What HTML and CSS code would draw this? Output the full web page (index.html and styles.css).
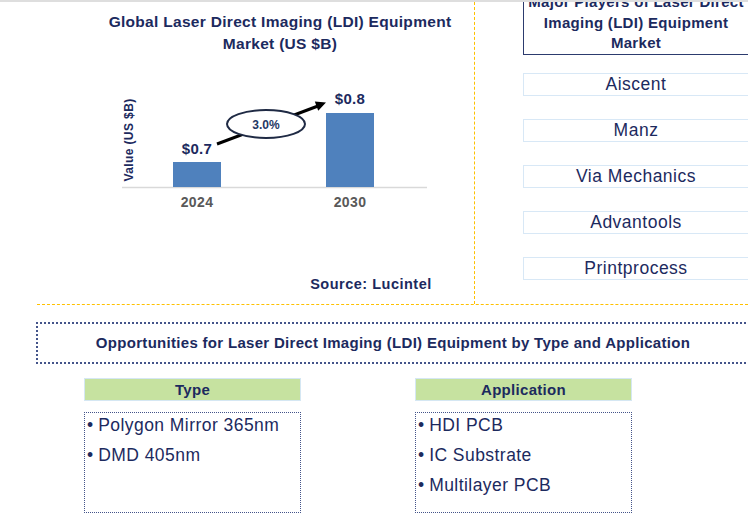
FILE: index.html
```html
<!DOCTYPE html>
<html lang="en">
<head>
<meta charset="utf-8">
<title>Laser Direct Imaging (LDI) Equipment Market</title>
<link rel="stylesheet" href="styles.css">
</head>
<body>
<div class="page">
  <div class="topbar"></div>
  <div class="top">
    <section class="chart-panel">
      <h1 class="chart-title">Global Laser Direct Imaging (LDI) Equipment<br>Market (US $B)</h1>
      <svg class="chart" width="476" height="161" viewBox="0 54 476 161" xmlns="http://www.w3.org/2000/svg">
        <line x1="122" y1="186.5" x2="427" y2="186.5" stroke="#d9d9d9" stroke-width="1.5"/>
        <rect x="173" y="161" width="48" height="25" fill="#4f81bd"/>
        <rect x="326" y="112" width="48" height="74" fill="#4f81bd"/>
        <text class="axis-label" transform="translate(132.5,139) rotate(-90)" text-anchor="middle">Value (US $B)</text>
        <text class="val" x="197" y="152.5" text-anchor="middle">$0.7</text>
        <text class="val" x="350" y="102.5" text-anchor="middle">$0.8</text>
        <text class="year" x="197" y="206" text-anchor="middle">2024</text>
        <text class="year" x="350" y="206" text-anchor="middle">2030</text>
        <line x1="217" y1="143" x2="318" y2="105" stroke="#000" stroke-width="3"/>
        <polygon points="326,101.5 318.2,109.8 314.8,100.6" fill="#000"/>
        <ellipse cx="266" cy="123" rx="39" ry="14" fill="#fff" stroke="#1f2a44" stroke-width="2"/>
        <text class="cagr" x="266" y="127.5" text-anchor="middle">3.0%</text>
      </svg>
      <p class="source">Source: Lucintel</p>
    </section>
    <aside class="players">
      <div class="players-head">Major Players of Laser Direct<br>Imaging (LDI) Equipment<br>Market</div>
      <ul class="player-list">
        <li>Aiscent</li>
        <li>Manz</li>
        <li>Via Mechanics</li>
        <li>Advantools</li>
        <li>Printprocess</li>
      </ul>
    </aside>
  </div>
  <div class="divider"></div>
  <div class="opps"><h2 class="opps-title">Opportunities for Laser Direct Imaging (LDI) Equipment by Type and Application</h2></div>
  <div class="cols">
    <div class="col">
      <div class="col-head">Type</div>
      <ul class="col-list">
        <li>Polygon Mirror 365nm</li>
        <li>DMD 405nm</li>
      </ul>
    </div>
    <div class="col">
      <div class="col-head">Application</div>
      <ul class="col-list">
        <li>HDI PCB</li>
        <li>IC Substrate</li>
        <li>Multilayer PCB</li>
      </ul>
    </div>
  </div>
</div>
</body>
</html>
```
FILE: styles.css
```css
* { box-sizing: border-box; }
html, body { margin: 0; padding: 0; background: #fff; }
body { font-family: "Liberation Sans", Arial, sans-serif; color: #1c2a5e; }
.page { width: 748px; height: 529px; overflow: hidden; }
.topbar { height: 2px; background: #dedede; }
.top { display: flex; height: 302px; overflow: hidden; }
.chart-panel { width: 475px; flex: none; border-right: 1px dashed #ffc000; }
.chart-title { margin: 0; padding: 9px 0 0 86px; font-size: 15.5px; letter-spacing: 0.3px; line-height: 22px; font-weight: bold; text-align: center; color: #1c2a5e; }
.chart { display: block; }
.chart text { font-family: "Liberation Sans", Arial, sans-serif; font-weight: bold; }
.axis-label { font-size: 12px; letter-spacing: 0.4px; fill: #1c2a5e; }
.val { font-size: 15px; letter-spacing: 0.3px; fill: #1c2a5e; }
.year { font-size: 14px; letter-spacing: 0.4px; fill: #595959; }
.cagr { font-size: 12px; fill: #1f3864; }
.source { margin: 58px 0 0; padding-left: 268px; font-size: 14.5px; letter-spacing: 0.5px; line-height: 20px; font-weight: bold; text-align: center; }
.players { flex: 1; padding-left: 48px; }
.players-head { width: 226px; margin-top: -11px; border: 1.5px solid #2c3b6e; font-size: 15px; letter-spacing: 0.3px; line-height: 20.5px; font-weight: bold; text-align: center; white-space: nowrap; }
.player-list { list-style: none; margin: 18px 0 0; padding: 0; display: flex; flex-direction: column; gap: 23px; }
.player-list li { width: 226px; height: 23px; border: 1.5px solid #d8e8f6; font-size: 17.5px; letter-spacing: 0.5px; line-height: 20px; text-align: center; }
.divider { margin-left: 37px; border-top: 1px dashed #ffc000; }
.opps { margin: 17px 0 0 36px; width: 714px; height: 42px; border: 2px dotted #44548a; }
.opps-title { margin: 0; font-size: 15px; letter-spacing: 0.3px; line-height: 38px; font-weight: bold; text-align: center; }
.cols { display: flex; gap: 114px; margin-top: 14px; padding-left: 84px; }
.col { width: 217px; }
.col-head { height: 23px; background: #c6e2a0; border: 1px solid #d5e7f3; font-size: 15px; letter-spacing: 0.3px; line-height: 21px; font-weight: bold; text-align: center; }
.col-list { list-style: none; margin: 11px 0 0; padding: 0 0 0 2px; height: 101px; border: 1.5px dotted #44548a; }
.col-list li { font-size: 17.5px; letter-spacing: 0.45px; line-height: 30px; position: relative; top: -3px; white-space: nowrap; }
.col-list li::before { content: "\2022"; margin-right: 5px; letter-spacing: 0; }
```
